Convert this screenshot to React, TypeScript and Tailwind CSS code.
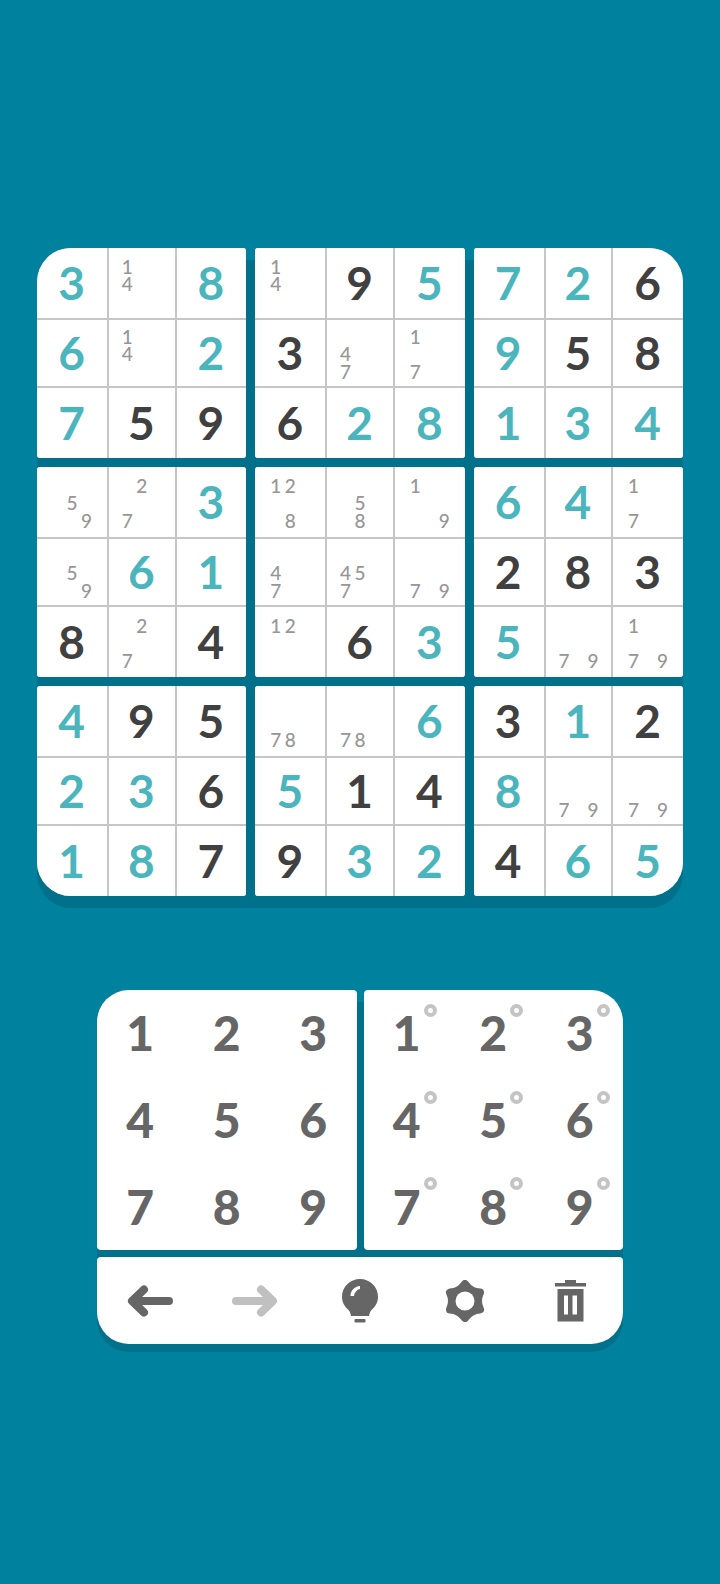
const BOARD = [
  [['t3', 'n14', 't8', 't6', 'n14', 't2', 't7', 'd5', 'd9'], ['n14', 'd9', 't5', 'd3', 'n47', 'n17', 'd6', 't2', 't8'], ['t7', 't2', 'd6', 't9', 'd5', 'd8', 't1', 't3', 't4']],
  [['n59', 'n27', 't3', 'n59', 't6', 't1', 'd8', 'n27', 'd4'], ['n128', 'n58', 'n19', 'n47', 'n457', 'n79', 'n12', 'd6', 't3'], ['t6', 't4', 'n17', 'd2', 'd8', 'd3', 't5', 'n79', 'n179']],
  [['t4', 'd9', 'd5', 't2', 't3', 'd6', 't1', 't8', 'd7'], ['n78', 'n78', 't6', 't5', 'd1', 'd4', 'd9', 't3', 't2'], ['d3', 't1', 'd2', 't8', 'n79', 'n79', 'd4', 't6', 't5']],
];

const DIGITS = ['1', '2', '3', '4', '5', '6', '7', '8', '9'];

const CORNERS: Record<string, string> = {
  '0-0': 'rounded-tl-[34px]',
  '0-2': 'rounded-tr-[34px]',
  '2-0': 'rounded-bl-[34px]',
  '2-2': 'rounded-br-[34px]',
};

function Cell({ value }: { value: string }) {
  const kind = value[0];
  const text = value.slice(1);
  if (kind === 'n') {
    return (
      <div className="bg-white grid grid-cols-[repeat(3,14.5px)] grid-rows-[repeat(3,17.5px)] place-content-center text-[19px] leading-[17px] font-medium text-[#969696] pt-[1px]">
        {DIGITS.map((d) => (
          <span key={d} className="flex items-center justify-center">
            {text.includes(d) ? d : ''}
          </span>
        ))}
      </div>
    );
  }
  return (
    <div
      className={`bg-white flex items-center justify-center text-[46px] leading-none font-bold pr-[1px] ${
        kind === 't' ? 'text-[#4ab5bc]' : 'text-[#404040]'
      }`}
    >
      {text}
    </div>
  );
}

function Board() {
  return (
    <div className="relative">
      <div className="absolute left-0 right-0 top-[12px] bottom-[-12px] rounded-[34px] bg-[#00708b]" />
      <div className="relative grid grid-cols-3 gap-[9px]">
        {BOARD.flatMap((row, r) =>
          row.map((block, c) => (
            <div
              key={`${r}-${c}`}
              className={`grid grid-cols-[70px_65.5px_1fr] grid-rows-[70px_66px_70px] gap-[2px] overflow-hidden rounded-[3px] bg-[#c6c6c6] ${CORNERS[`${r}-${c}`] ?? ''}`}
            >
              {block.map((v, i) => (
                <Cell key={i} value={v} />
              ))}
            </div>
          )),
        )}
      </div>
    </div>
  );
}

function Keypad({ notes, className }: { notes?: boolean; className: string }) {
  return (
    <div className={`bg-white grid grid-cols-3 grid-rows-3 h-[260px] ${className}`}>
      {DIGITS.map((d) => (
        <div key={d} className="relative flex items-center justify-center text-[48px] leading-none font-black text-[#666666]">
          {d}
          {notes && (
            <span className="absolute left-[60px] top-[14px] w-[13px] h-[13px] rounded-full border-[4px] border-[#c4c4c4]" />
          )}
        </div>
      ))}
    </div>
  );
}

function Toolbar() {
  return (
    <div className="bg-white h-[87px] rounded-t-[4px] rounded-b-[32px] grid grid-cols-5 items-center justify-items-center">
      <svg width="46" height="32" viewBox="0 0 46 32" fill="none" stroke="#666666" strokeWidth="8" strokeLinecap="round" strokeLinejoin="round">
        <path d="M42 16H6M17 4.500 5 16l12 11.500" />
      </svg>
      <svg width="46" height="32" viewBox="0 0 46 32" fill="none" stroke="#c0c0c0" strokeWidth="8" strokeLinecap="round" strokeLinejoin="round">
        <path d="M4 16h36M29 4.500 41 16 29 27.500" />
      </svg>
      <svg width="36" height="44" viewBox="0 0 36 44">
        <path fill="#666666" d="M18 0C8 0 0 8 0 17.500c0 6.500 3 10.500 6.500 13.500 1.500 1.500 2 3.500 2.500 6h18c.5-2.500 1-4.500 2.500-6C33 28 36 24 36 17.500 36 8 28 0 18 0z" />
        <path fill="#ffffff" d="M8.500 17C8.500 11.500 12.500 7.500 18 7v3c-3 .5-5.500 3.500-6 7z" />
        <rect x="12.500" y="40" width="11" height="3.500" rx="1" fill="#666666" />
      </svg>
      <svg width="40" height="42" viewBox="0 0 40 42">
        <path
          fill="#666666"
          stroke="#666666"
          strokeWidth="8"
          strokeLinejoin="round"
          d="M20 4Q25.500 12 35 12.500 31 21 35 29.500 25.500 30 20 38 14.500 30 5 29.500 9 21 5 12.500 14.500 12 20 4z"
        />
        <circle cx="20" cy="21" r="9.500" fill="#ffffff" />
      </svg>
      <svg width="31" height="42" viewBox="0 0 31 42">
        <path fill="#666666" d="M10 0h11v3h10v3.500H0V3h10z" />
        <path fill="#666666" fillRule="evenodd" d="M2.500 9h26v32.500h-26zM9 15.500v19h4v-19zm8.500 0v19h4.500v-19z" />
      </svg>
    </div>
  );
}

export default function App() {
  return (
    <div className="min-h-[1584px] bg-[#00819e] px-[37px] pt-[248px] font-['Lato','Liberation_Sans',sans-serif]">
      <Board />
      <div className="relative mt-[94px] mx-[60px]">
        <div className="absolute left-0 right-0 top-[12px] bottom-[-8px] rounded-[32px] bg-[#00708b]" />
        <div className="relative flex flex-col gap-[7px]">
          <div className="flex gap-[7px]">
            <Keypad className="flex-1 rounded-tl-[32px] rounded-tr-[4px] rounded-b-[4px]" />
            <Keypad notes className="flex-1 rounded-tr-[32px] rounded-tl-[4px] rounded-b-[4px]" />
          </div>
          <Toolbar />
        </div>
      </div>
    </div>
  );
}
